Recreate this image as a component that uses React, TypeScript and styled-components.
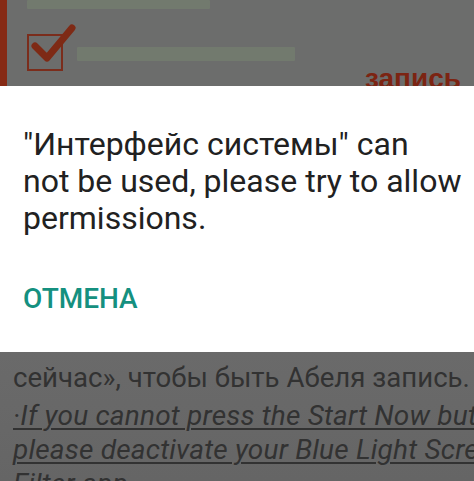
import React from "react";
import styled, { createGlobalStyle } from "styled-components";

const GlobalStyle = createGlobalStyle`
  html, body {
    margin: 0;
    padding: 0;
    background: #686868;
    font-family: Roboto, "Noto Sans", sans-serif;
    overflow: hidden;
  }
`;

const Screen = styled.div`
  width: 474px;
  height: 481px;
  display: flex;
  flex-direction: column;
  overflow: hidden;
`;

const TopCard = styled.div`
  height: 86px;
  flex-shrink: 0;
  display: flex;
  background: #6c6d6c;
  overflow: hidden;
`;

const AccentBar = styled.div`
  width: 7px;
  background: #862a14;
`;

const CardBody = styled.div`
  flex: 1;
  display: flex;
  flex-direction: column;
  padding-left: 20px;
`;

const Placeholder = styled.div<{ $w: number; $h: number }>`
  flex-shrink: 0;
  width: ${(p) => p.$w}px;
  height: ${(p) => p.$h}px;
  background: #727a6e;
  border-radius: 1px;
`;

const CheckRow = styled.div`
  flex-shrink: 0;
  display: flex;
  align-items: flex-start;
  margin-top: 14px;
  height: 48px;
`;

const CheckBox = styled.svg`
  width: 50px;
  height: 50px;
  flex-shrink: 0;
`;

const CheckLabel = styled.div`
  margin-top: 24px;
`;

const RecordLink = styled.div`
  flex-shrink: 0;
  align-self: flex-end;
  margin: -6px 13px 0 0;
  font-family: "Liberation Sans", Arial, sans-serif;
  font-weight: 700;
  font-size: 28px;
  line-height: 28px;
  color: #7c2412;
`;

const Dialog = styled.div`
  height: 266px;
  flex-shrink: 0;
  background: #ffffff;
  padding: 40px 8px 0 23px;
  box-sizing: border-box;
`;

const Message = styled.p`
  margin: 0;
  font-size: 32px;
  line-height: 37px;
  color: #212121;
  white-space: nowrap;
`;

const ActionButton = styled.button`
  display: block;
  margin-top: 46px;
  padding: 0;
  border: none;
  background: none;
  font-family: Roboto, sans-serif;
  font-weight: 500;
  font-size: 28px;
  line-height: 32px;
  color: #15907f;
  cursor: pointer;
`;

const BottomContent = styled.div`
  flex: 1;
  padding: 9px 0 0 13px;
  background: linear-gradient(#6a6a6a, #656565);
  white-space: nowrap;
  overflow: hidden;
`;

const BodyLine = styled.div`
  font-size: 27.6px;
  line-height: 34px;
  margin-bottom: 4px;
  color: #323232;
`;

const NoteLine = styled.div`
  font-size: 28px;
  line-height: 34px;
  letter-spacing: 0.2px;
  font-style: italic;
  text-decoration: underline;
  text-decoration-thickness: 2px;
  text-underline-offset: 3px;
  color: #323232;
`;

const App: React.FC = () => {
  return (
    <Screen>
      <GlobalStyle />
      <TopCard>
        <AccentBar />
        <CardBody>
          <Placeholder $w={183} $h={9} />
          <CheckRow>
            <CheckBox viewBox="0 0 50 50">
              <rect x="1" y="12" width="34" height="35" fill="none" stroke="#7b2d1c" strokeWidth="2" />
              <path
                d="M8 23 L20 35 L45 5"
                fill="none"
                stroke="#7e2a15"
                strokeWidth="7"
                strokeLinecap="round"
                strokeLinejoin="round"
              />
            </CheckBox>
            <CheckLabel>
              <Placeholder $w={218} $h={14} />
            </CheckLabel>
          </CheckRow>
          <RecordLink>запись</RecordLink>
        </CardBody>
      </TopCard>
      <Dialog>
        <Message>
          "Интерфейс системы" can
          <br />
          not be used, please try to allow
          <br />
          permissions.
        </Message>
        <ActionButton>ОТМЕНА</ActionButton>
      </Dialog>
      <BottomContent>
        <BodyLine>сейчас», чтобы быть Абеля запись.</BodyLine>
        <NoteLine>·If you cannot press the Start Now button,</NoteLine>
        <NoteLine>please deactivate your Blue Light Screen</NoteLine>
        <NoteLine>Filter app.</NoteLine>
      </BottomContent>
    </Screen>
  );
};

export default App;
